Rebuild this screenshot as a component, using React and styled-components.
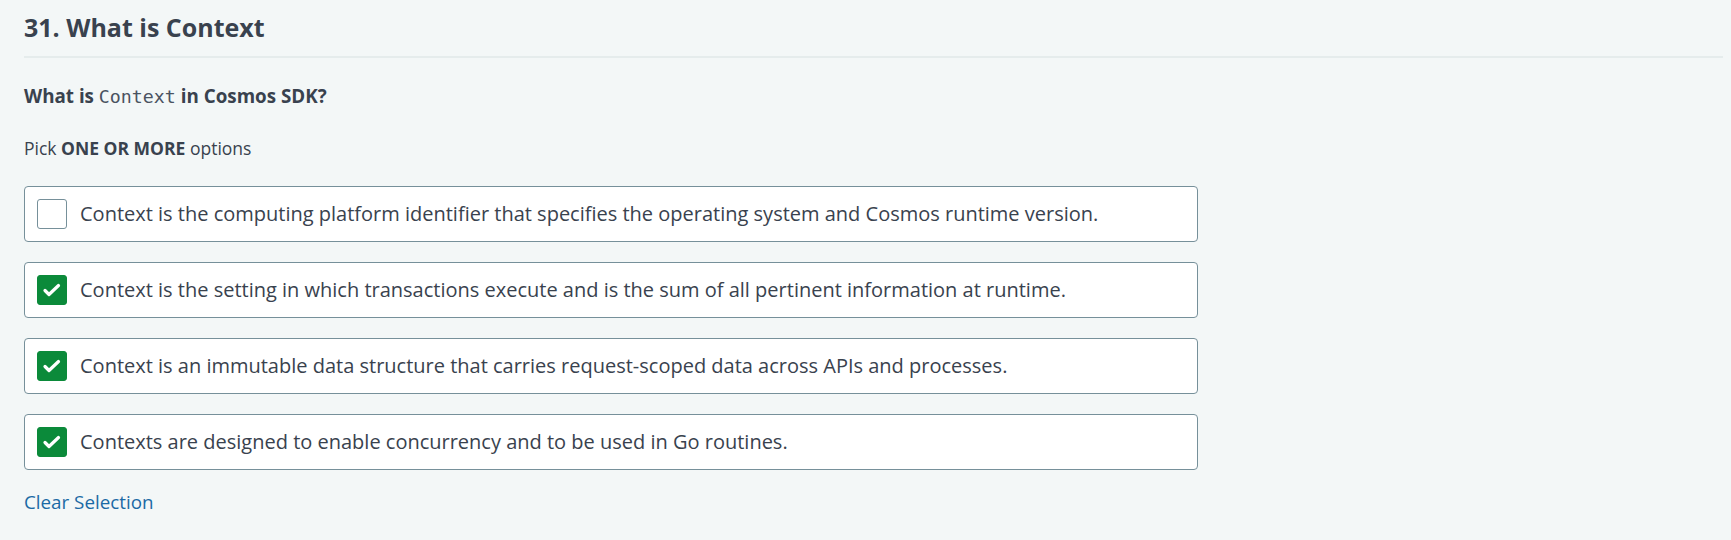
import React from "react";
import styled, { createGlobalStyle } from "styled-components";

const GlobalStyle = createGlobalStyle`
  html, body {
    margin: 0;
    padding: 0;
    background: #f3f7f7;
  }
  body {
    font-family: "Open Sans", "Noto Sans", sans-serif;
    color: #39424e;
  }
`;

const Page = styled.div`
  padding: 0 8px 0 24px;
`;

const Title = styled.h1`
  margin: 0;
  padding-top: 9px;
  height: 47px;
  font-size: 25px;
  font-weight: 700;
  line-height: 36px;
  color: #39424e;
  border-bottom: 2px solid #e5ecec;
`;

const Question = styled.p`
  margin: 25px 0 0;
  font-size: 18.8px;
  font-weight: 700;
  line-height: 26px;

  code {
    font-family: "DejaVu Sans Mono", "Liberation Mono", monospace;
    font-weight: 400;
    font-size: 18.3px;
    color: #4a5361;
  }
`;

const Hint = styled.p`
  margin: 26px 0 0;
  font-size: 17.5px;
  line-height: 24px;

  b {
    font-weight: 700;
  }
`;

const Options = styled.div`
  display: flex;
  flex-direction: column;
  gap: 20.5px;
  margin-top: 26px;
  width: 1174px;
`;

const Option = styled.label`
  display: flex;
  align-items: center;
  gap: 13px;
  height: 55.5px;
  box-sizing: border-box;
  padding: 0 12px;
  background: #ffffff;
  border: 1px solid #76909a;
  border-radius: 4px;
  font-size: 20px;
  color: #39424e;
  cursor: pointer;
`;

const Box = styled.span`
  flex: none;
  display: flex;
  width: 30px;
  height: 30px;
  box-sizing: border-box;
  border-radius: 3px;
  border: 1px solid ${(p) => (p.$checked ? "#0b8a3a" : "#76909a")};
  background: ${(p) => (p.$checked ? "#0b8a3a" : "#ffffff")};
`;

const ClearLink = styled.a`
  display: inline-block;
  margin-top: 19px;
  font-size: 18.8px;
  line-height: 26px;
  color: #1b6aa5;
  text-decoration: none;
  cursor: pointer;
`;

const Check = () => (
  <svg width="28" height="28" viewBox="1 1 28 28" fill="none">
    <path
      d="M8 15.5 L12 19.5 L21.5 10.5"
      stroke="#ffffff"
      strokeWidth="3.2"
      strokeLinecap="round"
      strokeLinejoin="round"
    />
  </svg>
);

const options = [
  {
    text: "Context is the computing platform identifier that specifies the operating system and Cosmos runtime version.",
    checked: false,
  },
  {
    text: "Context is the setting in which transactions execute and is the sum of all pertinent information at runtime.",
    checked: true,
  },
  {
    text: "Context is an immutable data structure that carries request-scoped data across APIs and processes.",
    checked: true,
  },
  {
    text: "Contexts are designed to enable concurrency and to be used in Go routines.",
    checked: true,
  },
];

export default function App() {
  return (
    <>
      <GlobalStyle />
      <Page>
        <Title>31. What is Context</Title>
        <Question>
          What is <code>Context</code> in Cosmos SDK?
        </Question>
        <Hint>
          Pick <b>ONE OR MORE</b> options
        </Hint>
        <Options>
          {options.map((o) => (
            <Option key={o.text}>
              <Box $checked={o.checked}>{o.checked && <Check />}</Box>
              {o.text}
            </Option>
          ))}
        </Options>
        <ClearLink>Clear Selection</ClearLink>
      </Page>
    </>
  );
}
